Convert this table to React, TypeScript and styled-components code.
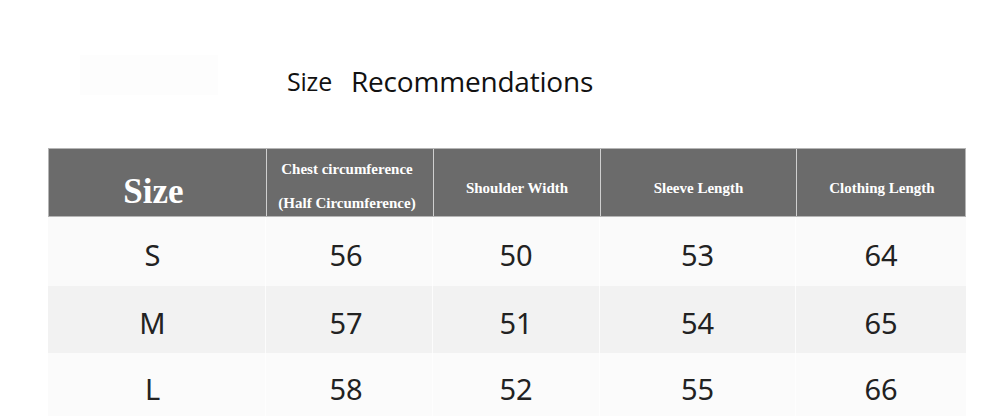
import React from 'react';
import styled, { createGlobalStyle } from 'styled-components';

const GlobalStyle = createGlobalStyle`
  html, body {
    margin: 0;
    padding: 0;
    background: #ffffff;
  }
  body {
    font-family: "Noto Sans", "Liberation Sans", sans-serif;
  }
`;

const Page = styled.div`
  width: 1000px;
  height: 416px;
  overflow: hidden;
  background: #ffffff;
`;

const TitleRow = styled.div`
  display: flex;
  align-items: flex-start;
  height: 148px;
  padding-top: 55px;
  padding-left: 80px;
  box-sizing: border-box;
`;

const FaintBox = styled.div`
  width: 138px;
  height: 40px;
  background: #fdfdfd;
  margin-right: 69px;
`;

const TitleText = styled.div<{ size: number; gap: number }>`
  font-family: "Open Sans", "Noto Sans", sans-serif;
  font-size: ${({ size }) => size}px;
  color: #111;
  line-height: 52px;
  margin-right: ${({ gap }) => gap}px;
  letter-spacing: -0.2px;
`;

const COLUMNS = '217px 167px 167px 196px 171px';

const Table = styled.div`
  margin-left: 48px;
  width: 918px;
`;

const HeaderRow = styled.div`
  display: grid;
  grid-template-columns: ${COLUMNS};
  grid-template-rows: 67px;
  height: 69px;
  background: #6b6b6b;
  border: 1px solid #b5b5b5;
  box-sizing: border-box;
`;

const HeadCell = styled.div<{ big?: boolean; shift?: number; lift?: number }>`
  display: flex;
  flex-direction: column;
  align-items: center;
  justify-content: center;
  min-height: 0;
  border-left: 1px solid #cfcfcf;
  &:first-child {
    border-left: none;
  }
  color: #ffffff;
  font-family: "Liberation Serif", "DejaVu Serif", serif;
  font-weight: bold;
  font-size: ${({ big }) => (big ? '35px' : '15px')};
  line-height: ${({ big }) => (big ? '40px' : '34px')};
  padding-top: ${({ lift }) => lift ?? 11}px;
  padding-right: ${({ shift }) => shift ?? 0}px;
`;

const BodyRow = styled.div<{ shade: string; h: number }>`
  display: grid;
  grid-template-columns: ${COLUMNS};
  height: ${({ h }) => h}px;
  background: ${({ shade }) => shade};
`;

const Cell = styled.div<{ shift?: number }>`
  display: flex;
  align-items: center;
  justify-content: center;
  border-left: 1px solid rgba(255, 255, 255, 0.75);
  &:first-child {
    border-left: none;
  }
  font-family: "Noto Sans", "Liberation Sans", sans-serif;
  font-size: 29px;
  color: #222;
  padding-top: 5px;
  padding-right: ${({ shift }) => shift ?? 0}px;
`;

const shifts = [8, 6, 0, 0, 0];

const rows = [
  { size: 'S', values: [56, 50, 53, 64], shade: '#fafafa', h: 69 },
  { size: 'M', values: [57, 51, 54, 65], shade: '#f2f2f2', h: 67 },
  { size: 'L', values: [58, 52, 55, 66], shade: '#fbfbfb', h: 66 },
];

export default function App() {
  return (
    <Page>
      <GlobalStyle />
      <TitleRow>
        <FaintBox />
        <TitleText size={25} gap={19}>Size</TitleText>
        <TitleText size={28} gap={0}>Recommendations</TitleText>
      </TitleRow>
      <Table>
        <HeaderRow>
          <HeadCell big shift={shifts[0]} lift={18}>Size</HeadCell>
          <HeadCell shift={shifts[1]} lift={7}>
            <span>Chest circumference</span>
            <span>(Half Circumference)</span>
          </HeadCell>
          <HeadCell>Shoulder Width</HeadCell>
          <HeadCell>Sleeve Length</HeadCell>
          <HeadCell>Clothing Length</HeadCell>
        </HeaderRow>
        {rows.map((row) => (
          <BodyRow key={row.size} shade={row.shade} h={row.h}>
            <Cell shift={shifts[0]}>{row.size}</Cell>
            {row.values.map((v, i) => (
              <Cell key={i} shift={shifts[i + 1]}>
                {v}
              </Cell>
            ))}
          </BodyRow>
        ))}
      </Table>
    </Page>
  );
}
